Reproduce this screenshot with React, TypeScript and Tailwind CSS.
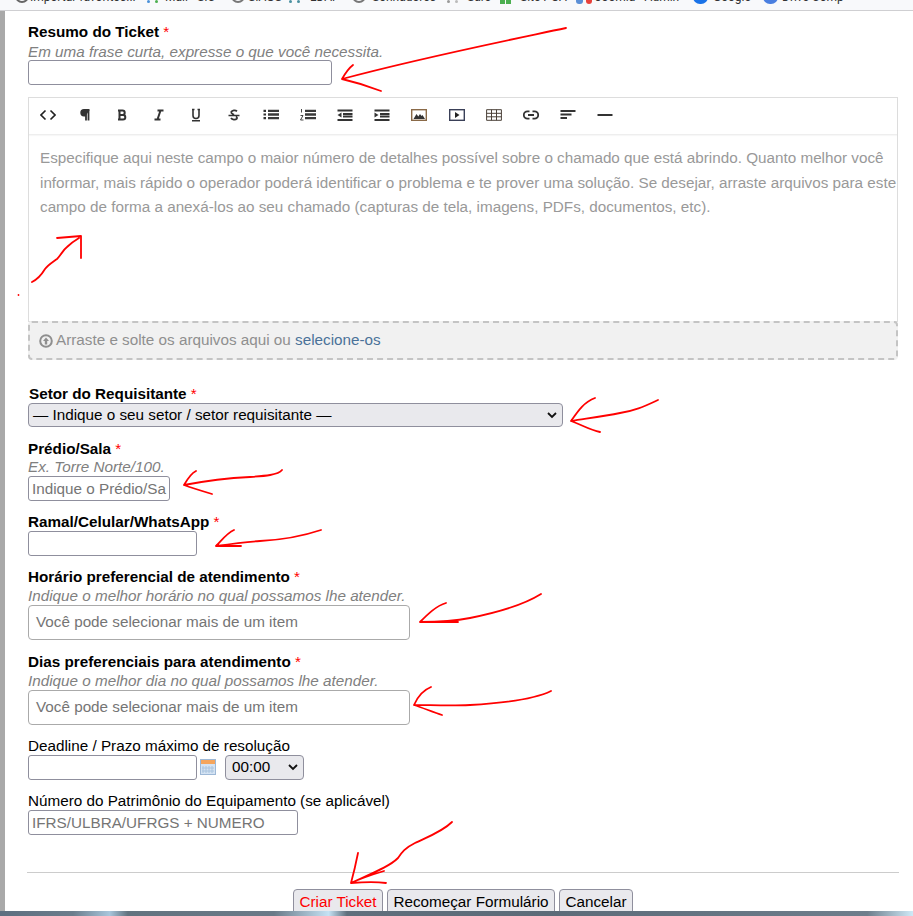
import React from "react";

const Req = () => <span className="text-[#ff0000] font-normal"> *</span>;

function Tool({ children }: { children: React.ReactNode }) {
  return (
    <div className="w-[37.2px] h-[36px] pb-[2px] flex items-center justify-center shrink-0">
      <svg width="16" height="14" viewBox="0 0 16 14" fill="none" stroke="#333" strokeWidth="1.5">
        {children}
      </svg>
    </div>
  );
}

const Lines = () => <path d="M5 2.800H16M5 6.500H16M5 10.200H16" strokeWidth="2.300" stroke="#3a3a3a" />;

const toolbar = [
  <path key="code" d="M5.500 2.500L1 7l4.500 4.500M10.500 2.500L15 7l-4.500 4.500" strokeWidth="1.600" stroke="#222" />,
  <path key="p" d="M11.500 2V12.500M9 2V12.500M12.500 2H7a2.800 2.800 0 0 0 0 5.600H9" strokeWidth="1.800" fill="#333" />,
  <path key="b" d="M5 2.500h3.500a2.200 2.200 0 0 1 0 4.400H5M5 6.900h4a2.300 2.300 0 0 1 0 4.600H5M5.500 2v10M4 2.500h2M4 11.500h2" strokeWidth="2" />,
  <path key="i" d="M6.500 2.500h6M3.500 11.500h6M9.500 2.500l-3 9" strokeWidth="2" />,
  <path key="u" d="M5 1.500v6a3 3 0 0 0 6 0v-6M4 1.500h2.500M9.500 1.500H12M4 12.700h8" strokeWidth="1.600" />,
  <path key="s" d="M11 3.200A3.500 2.500 0 0 0 5.200 4c-.4 1.500 1.500 2 2.800 2.800M5 10a3.500 2.500 0 0 0 6 .6c.4-1-.2-1.600-1-2.200M2.500 7.500h11" strokeWidth="1.700" />,
  <g key="ul"><Lines /><path d="M0.500 1.700h2.500v2.200h-2.500zM0.500 5.400h2.500v2.200h-2.500zM0.500 9.100h2.500v2.200h-2.500z" fill="#333" stroke="none" /></g>,
  <g key="ol"><Lines /><path d="M1.500 1v3.500M0.500 7.500h2.500L0.500 12h3" strokeWidth="0.900" /></g>,
  <g key="out"><path d="M0.500 2.500h15M6 6h9.500M6 8.500h9.500M0.500 12h15" strokeWidth="1.900" /><path d="M4.500 4.500v5L0.500 7z" fill="#333" stroke="none" /></g>,
  <g key="in"><path d="M0.500 2.500h15M6 6h9.500M6 8.500h9.500M0.500 12h15" strokeWidth="1.900" /><path d="M0.500 4.500v5L4.500 7z" fill="#333" stroke="none" /></g>,
  <g key="img"><rect x="0.700" y="1.700" width="14.600" height="10.600" stroke="#8a6a48" strokeWidth="1.400" /><path d="M2.500 11l3-5 1.800 2.500L9 6l1.500 2 1-1 2.500 4z" fill="#333" stroke="none" /></g>,
  <g key="vid"><rect x="0.700" y="1.700" width="14.600" height="10.600" stroke="#3a4058" strokeWidth="1.400" /><path d="M6 4v6L10.500 7z" fill="#222" stroke="none" /></g>,
  <path key="tbl" d="M.6 1.700h14.800v10.600H.600zM.600 5.300h14.800M.600 8.800h14.800M5.500 1.700v10.600M10.500 1.700v10.600" strokeWidth="1" stroke="#4a4038" />,
  <path key="link" d="M6.500 3.300H4.500a3.700 3.700 0 0 0 0 7.400h2M9.500 3.300h2a3.700 3.700 0 0 1 0 7.400h-2M5 7h6" strokeWidth="1.800" />,
  <path key="align" d="M0.500 3h15M0.500 6.500h11M0.500 10h6.500" strokeWidth="2" />,
  <path key="hr" d="M0.500 7h15" strokeWidth="2" />,
];

const inputCls = "h-[25px] border border-[#8f8f9d] rounded-[3px] bg-white px-[3px] text-[15.250px] text-[#757575] block leading-none";

function MultiBox() {
  return (
    <div className="w-[382px] h-[35px] border border-[#aaaaaa] rounded-[4px] bg-white flex items-center pl-[7px] text-[15.250px] text-[#757575]">
      Você pode selecionar mais de um item
    </div>
  );
}

const Hint = ({ children }: { children: React.ReactNode }) => (
  <div className="italic text-[15.250px] leading-[18px] text-[#808080]">{children}</div>
);
const Label = ({ children }: { children: React.ReactNode }) => (
  <div className="font-bold text-[15.250px] leading-[18px] text-black">{children}</div>
);

function Ink() {
  const strokes = [
    "M566 28C500 42 420 58 342 79M342 79C346 72 349 68 353 65M342 79C355 82 368 86 381 91",
    "M32 282C38 279 42 274 45 269C48 265 53 262 57 259C61 255 63 250 67 247C71 243 74 241 79 238M57 238L81 236V258",
    "M658 400C645 406 635 411 620 413C605 416 590 418 571 421M571 421C578 411 584 402 595 398M571 421C580 424 590 430 600 432",
    "M282 470C278 475 265 476 250 477C230 478 205 481 184 485M184 485C188 478 192 473 196 471M184 485C192 488 202 491 212 494",
    "M321 530C300 537 280 540 260 541C245 542 230 544 216 546M216 546C222 540 227 533 234 530M216 546H241",
    "M541 594C525 604 500 612 470 618C455 621 440 622 420 622M420 622C428 614 436 606 446 603M420 622H458",
    "M551 691C535 699 505 703 470 705C450 706 430 705 414 705M414 705C417 698 421 691 431 687M414 705C423 708 433 712 442 715",
    "M452 822C442 832 425 838 415 843C405 848 402 852 398 858C390 866 375 872 351 883M351 883C354 872 356 863 358 853M351 883C365 882 378 882 386 883M351 883C362 878 374 874 384 871",
  ];
  return (
    <svg className="absolute left-0 top-0 pointer-events-none" width="913" height="916" fill="none">
      {strokes.map((d, i) => (
        <path key={i} d={d} stroke="#ff0000" strokeWidth="1.800" strokeLinecap="round" strokeLinejoin="round" />
      ))}
      <circle cx="18.500" cy="295" r="0.900" fill="#ff0000" />
    </svg>
  );
}

function Fav({ kind, x, c, c2 }: { kind: string; x: number; c: string; c2: string }) {
  if (kind === "ring") {
    return <span className="absolute -top-[11px] w-[14px] h-[14px] rounded-full border-2" style={{ left: x, borderColor: c }} />;
  }
  if (kind === "dots") {
    return (
      <span className="absolute top-0 flex gap-[5px]" style={{ left: x }}>
        <span className="w-[3px] h-[3px] rounded-full" style={{ background: c }} />
        <span className="w-[3px] h-[3px] rounded-full" style={{ background: c2 }} />
      </span>
    );
  }
  if (kind === "blocks") {
    return (
      <span className="absolute top-0 flex gap-[1px]" style={{ left: x }}>
        <span className="w-[5px] h-[4px]" style={{ background: c }} />
        <span className="w-[5px] h-[4px]" style={{ background: c }} />
      </span>
    );
  }
  if (kind === "joomla") {
    return (
      <span className="absolute top-0 flex gap-[3px]" style={{ left: x }}>
        <span className="w-[7px] h-[4px] rounded-b-[3px]" style={{ background: c }} />
        <span className="w-[6px] h-[4px] rounded-b-[3px]" style={{ background: c2 }} />
      </span>
    );
  }
  return <span className="absolute -top-[10px] w-[15px] h-[14px] rounded-full" style={{ left: x, background: c }} />;
}

const bookmarks: [string, string, string, string, number, number][] = [
  ["Importar favoritos...", "ring", "#666666", "#666666", 15, 30],
  ["Mail - SIC", "dots", "#4a90d9", "#4caf50", 147, 165],
  ["SIAGS", "ring", "#777777", "#777777", 231, 248],
  ["LDAP", "dots", "#4a90a0", "#4a90a0", 289, 310],
  ["Sonhadores", "ring", "#777777", "#777777", 352, 372],
  ["Sare", "dots", "#999999", "#bbbbbb", 447, 467],
  ["Site POA", "blocks", "#4caf50", "#4caf50", 500, 520],
  ["Joomla - Admin", "joomla", "#5b8fd6", "#e8403a", 576, 595],
  ["Google", "solid", "#1a73e8", "#1a73e8", 693, 713],
  ["Drive Comp", "solid", "#4a7fe0", "#4a7fe0", 763, 782],
];

export default function App() {
  return (
    <div className="relative w-[913px] h-[916px] overflow-hidden bg-white font-['Liberation_Sans',Arial,sans-serif] text-black">
      <div className="h-[11px] bg-[#f8f9fb] border-b border-[#cfcfd2] overflow-hidden relative">
        {bookmarks.map(([t, kind, c, c2, x, tx]) => (
          <React.Fragment key={t}>
            <Fav kind={kind} x={x} c={c} c2={c2} />
            <span className="absolute -top-[10px] text-[12px] leading-[14px] text-[#333333] font-['Roboto',sans-serif] whitespace-nowrap" style={{ left: tx }}>
              {t}
            </span>
          </React.Fragment>
        ))}
      </div>
      <div className="flex h-[900px]">
        <div className="w-[5px] bg-[#a9a9a9] shrink-0" />
        <div className="flex-1 overflow-hidden pl-[23px] pt-[12px]">
          <Label>Resumo do Ticket<Req /></Label>
          <div className="mt-[2px]"><Hint>Em uma frase curta, expresse o que você necessita.</Hint></div>
          <div className={`${inputCls} w-[304px] h-[24px] -mt-[1px]`} />

          <div className="w-[870px] mt-[12px] border border-[#dddddd] bg-white">
            <div className="h-[36px] flex items-center border-b border-[#eeeeee] shadow-[0_1px_1px_rgba(0,0,0,0.03)] box-content">
              {toolbar.map((icon, i) => <Tool key={i}>{icon}</Tool>)}
            </div>
            <div className="h-[186px] pl-[11px] -mr-[3px] pt-[11px] text-[15.250px] leading-[24.500px] text-[#999999]">
              Especifique aqui neste campo o maior número de detalhes possível sobre o chamado que está abrindo. Quanto melhor você informar, mais rápido o operador poderá identificar o problema e te prover uma solução. Se desejar, arraste arquivos para este campo de forma a anexá-los ao seu chamado (capturas de tela, imagens, PDFs, documentos, etc).
            </div>
          </div>
          <div className="w-[870px] h-[39px] -mt-[1px] border-2 border-dashed border-[#c4c4c4] rounded-[4px] bg-[#f1f1f1] flex items-center pl-[9px] text-[15.250px] text-[#8f8f8f]">
            <svg width="14" height="14" viewBox="0 0 14 14" className="mr-[3px]">
              <circle cx="7" cy="7" r="5.800" fill="none" stroke="#8f8f8f" strokeWidth="2" />
              <path d="M7 3.500L10 7H8.200V10.500H5.800V7H4z" fill="#8f8f8f" />
            </svg>
            Arraste e solte os arquivos aqui ou&nbsp;<span className="text-[#4a7199]">selecione-os</span>
          </div>

          <div className="mt-[25px] ml-[1px]"><Label>Setor do Requisitante<Req /></Label></div>
          <div className="w-[535px] h-[24px] border border-[#8f8f9d] rounded-[4px] bg-[#e9e9ed] flex items-center justify-between pl-[4px] pr-[5px] text-[15.250px]">
            — Indique o seu setor / setor requisitante —
            <svg width="10" height="7" viewBox="0 0 10 7" fill="none" stroke="#111111" strokeWidth="1.800"><path d="M1 1l4 4 4-4" /></svg>
          </div>

          <div className="mt-[13px]"><Label>Prédio/Sala<Req /></Label></div>
          <Hint>Ex. Torre Norte/100.</Hint>
          <div className={`${inputCls} w-[142px] flex items-center overflow-hidden whitespace-nowrap`}>Indique o Prédio/Sa</div>

          <div className="mt-[12px]"><Label>Ramal/Celular/WhatsApp<Req /></Label></div>
          <div className={`${inputCls} w-[169px]`} />

          <div className="mt-[12px]"><Label>Horário preferencial de atendimento<Req /></Label></div>
          <div className="mt-[1px]"><Hint>Indique o melhor horário no qual possamos lhe atender.</Hint></div>
          <MultiBox />

          <div className="mt-[13px]"><Label>Dias preferenciais para atendimento<Req /></Label></div>
          <div className="mt-[1px]"><Hint>Indique o melhor dia no qual possamos lhe atender.</Hint></div>
          <MultiBox />

          <div className="mt-[12px] text-[15.250px] leading-[18px]">Deadline / Prazo máximo de resolução</div>
          <div className="flex items-center">
            <div className={`${inputCls} w-[169px]`} />
            <svg width="16" height="16" viewBox="0 0 16 16" className="ml-[3px] -mt-[2px]">
              <rect x="0.500" y="0.500" width="15" height="15" fill="#d4e3f3" stroke="#9db8d6" />
              <rect x="1" y="1" width="14" height="4" fill="#f5a55c" />
              <path d="M3 7v7M6 7v7M9 7v7M12 7v7M2 9h12M2 12h12" stroke="#aac4de" strokeWidth="1" />
            </svg>
            <div className="ml-[9px] w-[79px] h-[25px] border border-[#8f8f9d] rounded-[4px] bg-[#e9e9ed] flex items-center justify-between pl-[6px] pr-[5px] text-[15.250px]">
              00:00
              <svg width="10" height="7" viewBox="0 0 10 7" fill="none" stroke="#111111" strokeWidth="1.800"><path d="M1 1l4 4 4-4" /></svg>
            </div>
          </div>

          <div className="mt-[12px] text-[15.250px] leading-[18px]">Número do Patrimônio do Equipamento (se aplicável)</div>
          <div className={`${inputCls} w-[270px] h-[24px] flex items-center whitespace-nowrap`}>IFRS/ULBRA/UFRGS + NUMERO</div>

          <div className="w-[872px] -ml-[1px] mt-[37px] border-t border-[#cccccc]" />
          <div className="mt-[16px] w-[870px] flex justify-center gap-[4px] text-[15.250px] leading-none">
            <div className="w-[90px] h-[26px] border border-[#8f8f9d] rounded-[4px] bg-[#e9e9ed] flex items-center justify-center text-[#ff0000]">Criar Ticket</div>
            <div className="w-[168px] h-[26px] border border-[#8f8f9d] rounded-[4px] bg-[#e9e9ed] flex items-center justify-center whitespace-nowrap">Recomeçar Formulário</div>
            <div className="w-[74px] h-[26px] border border-[#8f8f9d] rounded-[4px] bg-[#e9e9ed] flex items-center justify-center">Cancelar</div>
          </div>
        </div>
      </div>
      <div className="absolute left-0 bottom-0 w-full h-[5px] bg-[linear-gradient(90deg,#5d6f80_0%,#6b7d8c_8%,#a8c6dc_12%,#62737f_14%,#6a7a88_30%,#c5e2f4_36%,#5f6f7c_38%,#5c6b78_60%,#6e7e8c_95%,#cfeaf8_100%)]" />
      <Ink />
    </div>
  );
}
